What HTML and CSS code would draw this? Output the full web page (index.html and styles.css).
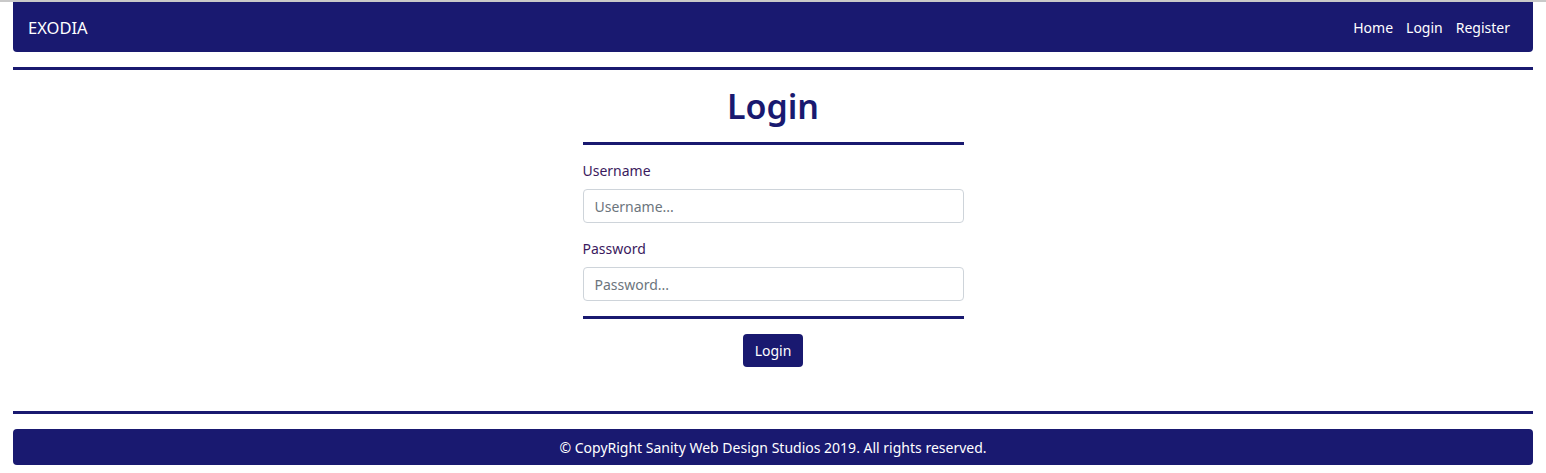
FILE: index.html
```html
<!DOCTYPE html>
<html>
<head>
<meta charset="utf-8">
<link rel="stylesheet" href="styles.css">
</head>
<body>
<div class="page">
  <nav class="navbar">
    <span class="brand">EXODIA</span>
    <ul class="nav-links">
      <li>Home</li>
      <li>Login</li>
      <li>Register</li>
    </ul>
  </nav>
  <hr class="rule">
  <main class="main">
    <form class="login-form">
      <h1 class="title">Login</h1>
      <hr class="rule">
      <div class="field">
        <label class="label">Username</label>
        <input class="input" type="text" placeholder="Username...">
      </div>
      <div class="field">
        <label class="label">Password</label>
        <input class="input" type="password" placeholder="Password...">
      </div>
      <hr class="rule">
      <div class="actions">
        <button class="btn" type="button">Login</button>
      </div>
    </form>
  </main>
  <hr class="rule">
  <footer class="footer">© CopyRight Sanity Web Design Studios 2019. All rights reserved.</footer>
</div>
</body>
</html>
```
FILE: styles.css
```css
html {
  border-top: 2px solid #c9c9c9;
}
body {
  margin: 0;
  font-family: "Noto Sans", "Open Sans", sans-serif;
  background: #fff;
  color: #191970;
}
.page {
  padding: 0 13px;
}
.navbar {
  height: 50px;
  background: #191970;
  border-radius: 0 0 4px 4px;
  display: flex;
  align-items: center;
  justify-content: space-between;
  padding: 0 15px;
  box-sizing: border-box;
}
.brand {
  color: #fff;
  font-size: 16.5px;
}
.nav-links {
  list-style: none;
  margin: 0 8px 0 0;
  padding: 0;
  display: flex;
  gap: 13px;
  color: #fff;
  font-size: 14px;
}
.rule {
  border: 0;
  height: 3px;
  background: #191970;
  margin: 0;
}
.page > .rule:first-of-type {
  margin-top: 15px;
}
.main {
  display: flex;
  justify-content: center;
  padding: 13px 0 44px;
}
.login-form {
  width: 381px;
}
.title {
  margin: 0 0 13px;
  text-align: center;
  font-size: 34px;
  font-weight: 600;
  line-height: 46px;
  color: #191970;
}
.field {
  margin-top: 16px;
}
.label {
  display: block;
  font-size: 14px;
  color: #3b1a5e;
  margin-bottom: 8px;
  line-height: 20px;
}
.input {
  display: block;
  width: 100%;
  box-sizing: border-box;
  height: 34px;
  border: 1px solid #ced4da;
  border-radius: 4px;
  padding: 0 11px;
  font-family: inherit;
  font-size: 14px;
}
.input::placeholder {
  color: #6c757d;
}
.login-form > .rule:last-of-type {
  margin-top: 15px;
}
.actions {
  display: flex;
  justify-content: center;
  margin-top: 15px;
}
.btn {
  background: #191970;
  color: #fff;
  border: 0;
  border-radius: 4px;
  height: 33px;
  padding: 0 12px;
  font-family: inherit;
  font-size: 14px;
}
.footer {
  margin-top: 15px;
  height: 36px;
  background: #191970;
  color: #fff;
  border-radius: 4px;
  display: flex;
  align-items: center;
  justify-content: center;
  font-size: 14px;
}
```
